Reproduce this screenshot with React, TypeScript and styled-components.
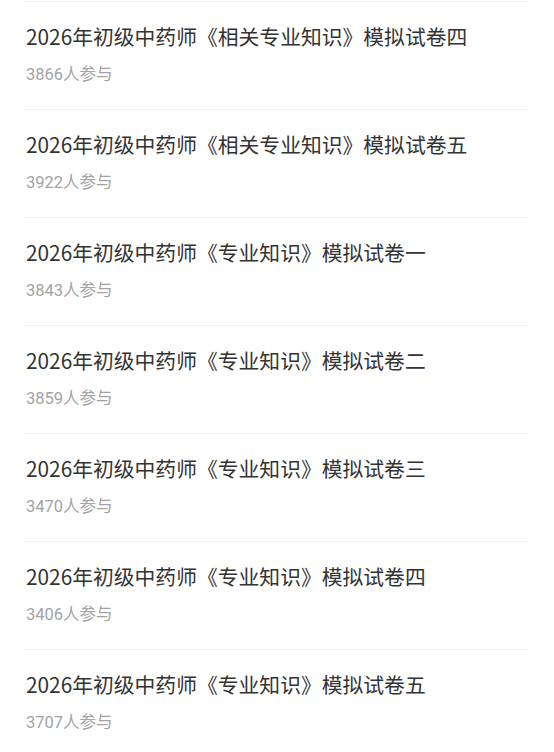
import { createGlobalStyle } from 'styled-components'
import styled from 'styled-components'

const GlobalStyle = createGlobalStyle`
  html, body {
    margin: 0;
    padding: 0;
    background: #ffffff;
  }
  body {
    font-family: "Noto Sans CJK SC", "Noto Sans", sans-serif;
  }
`;

const List = styled.ul`
  list-style: none;
  margin: 0;
  padding: 1px 26px 0 24px;
`;

const Item = styled.li`
  border-top: 1px solid #f1f1f1;
  padding: 19px 0 23px 2px;
  display: flex;
  flex-direction: column;
  gap: 13px;
`;

const Title = styled.div`
  font-size: 20.8px;
  line-height: 30px;
  color: #333333;
  white-space: nowrap;
`;

const Count = styled.div`
  font-family: Roboto, "Noto Sans CJK SC", sans-serif;
  font-size: 16.5px;
  line-height: 22px;
  color: #a3a3a3;
`;

type Paper = { title: string; joined: number };

const papers: Paper[] = [
  { title: '2026年初级中药师《相关专业知识》模拟试卷四', joined: 3866 },
  { title: '2026年初级中药师《相关专业知识》模拟试卷五', joined: 3922 },
  { title: '2026年初级中药师《专业知识》模拟试卷一', joined: 3843 },
  { title: '2026年初级中药师《专业知识》模拟试卷二', joined: 3859 },
  { title: '2026年初级中药师《专业知识》模拟试卷三', joined: 3470 },
  { title: '2026年初级中药师《专业知识》模拟试卷四', joined: 3406 },
  { title: '2026年初级中药师《专业知识》模拟试卷五', joined: 3707 },
];

const App = () => {
  return (
    <>
      <GlobalStyle />
      <List>
        {papers.map((p) => (
          <Item key={p.title}>
            <Title>{p.title}</Title>
            <Count>{p.joined}人参与</Count>
          </Item>
        ))}
      </List>
    </>
  )
}

export default App
